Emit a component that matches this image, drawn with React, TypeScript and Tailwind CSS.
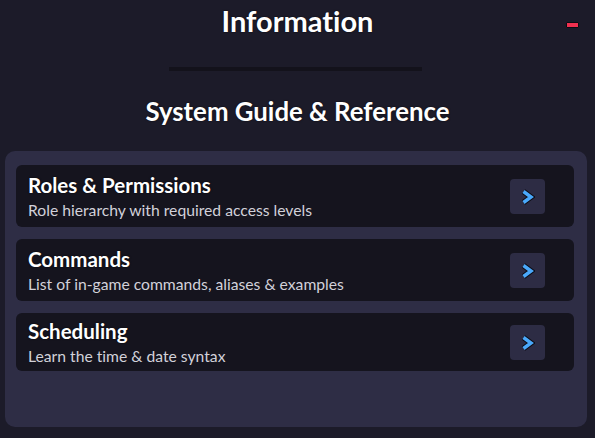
const items = [
  { title: "Roles & Permissions", desc: "Role hierarchy with required access levels", h: "h-[62px]" },
  { title: "Commands", desc: "List of in-game commands, aliases & examples", h: "h-[62px]" },
  { title: "Scheduling", desc: "Learn the time & date syntax", h: "h-[58px]" },
];

function Chevron() {
  return (
    <svg width="15" height="16" viewBox="0 0 15 16" className="mt-[2px]">
      <polyline points="3.5,2.5 11,8 3.5,13.5" fill="none" stroke="#0d0c14" strokeWidth="5.5" />
      <polyline points="3.5,2.5 11,8 3.5,13.5" fill="none" stroke="#4aa8fa" strokeWidth="3.5" />
    </svg>
  );
}

export default function App() {
  return (
    <div
      className="w-[595px] h-[438px] bg-[#1c1b29] overflow-hidden text-white [font-variant-ligatures:none]"
      style={{ fontFamily: "Lato, 'Noto Sans', sans-serif" }}
    >
      <div className="relative flex justify-center pt-[3px] h-[44px]">
        <h1 className="text-[29px] leading-[36px] font-bold [text-shadow:0_0_2px_rgba(0,0,0,0.7)]">Information</h1>
        <button
          className="absolute right-[16px] top-[22px] w-[13px] h-[6px] bg-[#f0304f] border border-[#0d0c14] rounded-[1px]"
          aria-label="minimize"
        />
      </div>
      <div className="ml-[169px] mt-[23px] w-[253px] h-[4px] bg-[#13121b]" />
      <h2 className="mt-[24px] text-center text-[25.8px] leading-[32px] font-bold [text-shadow:0_0_2px_rgba(0,0,0,0.7)]">
        System Guide &amp; Reference
      </h2>
      <div className="ml-[5px] mt-[24px] w-[582px] h-[276px] rounded-[10px] bg-[#2e2d45] pl-[11px] pr-[13px] pt-[14px] flex flex-col gap-[12px]">
        {items.map((it) => (
          <div key={it.title} className={`${it.h} rounded-[6px] bg-[#15141e] flex items-center pl-[12px] pr-[29px]`}>
            <div className="flex-1 flex flex-col">
              <span className="text-[20.5px] leading-[24px] font-bold [text-shadow:0_0_2px_rgba(0,0,0,0.7)]">{it.title}</span>
              <span className="mt-[3px] text-[15.7px] leading-[20px] text-[#d2d1da]">{it.desc}</span>
            </div>
            <div className="w-[35px] h-[35px] rounded-[4px] bg-[#2d2c44] flex items-center justify-center">
              <Chevron />
            </div>
          </div>
        ))}
      </div>
    </div>
  );
}
